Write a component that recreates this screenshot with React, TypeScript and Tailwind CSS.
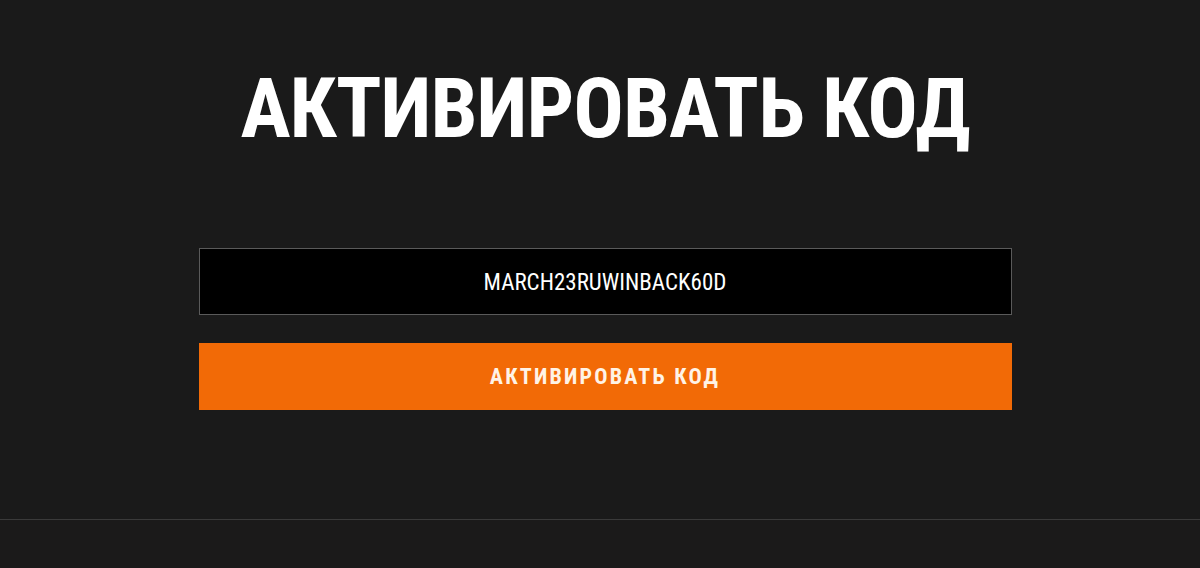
export default function App() {
  return (
    <div className="min-h-[568px] bg-[#1a1a1a] flex flex-col" style={{ fontFamily: '"Roboto Condensed", Roboto, sans-serif' }}>
      <div className="flex-1 flex flex-col items-center pl-[10px]">
        <h1 className="mt-[54px] text-[84px] leading-[110px] font-bold text-white tracking-[-1px]">
          АКТИВИРОВАТЬ КОД
        </h1>
        <div className="mt-[84px] w-[813px] flex flex-col gap-[28px]">
          <div className="h-[67px] bg-black border border-[#5a5a5a] flex items-center justify-center pt-[3px]">
            <span className="text-[23px] text-white">MARCH23RUWINBACK60D</span>
          </div>
          <button className="h-[67px] bg-[#f26a06] flex items-center justify-center">
            <span className="text-[22px] font-bold text-[#fff3e6] tracking-[2.2px]">АКТИВИРОВАТЬ КОД</span>
          </button>
        </div>
      </div>
      <div className="h-[49px] border-t border-[#3a3a3a] bg-[#1b1a1a]" />
    </div>
  );
}
